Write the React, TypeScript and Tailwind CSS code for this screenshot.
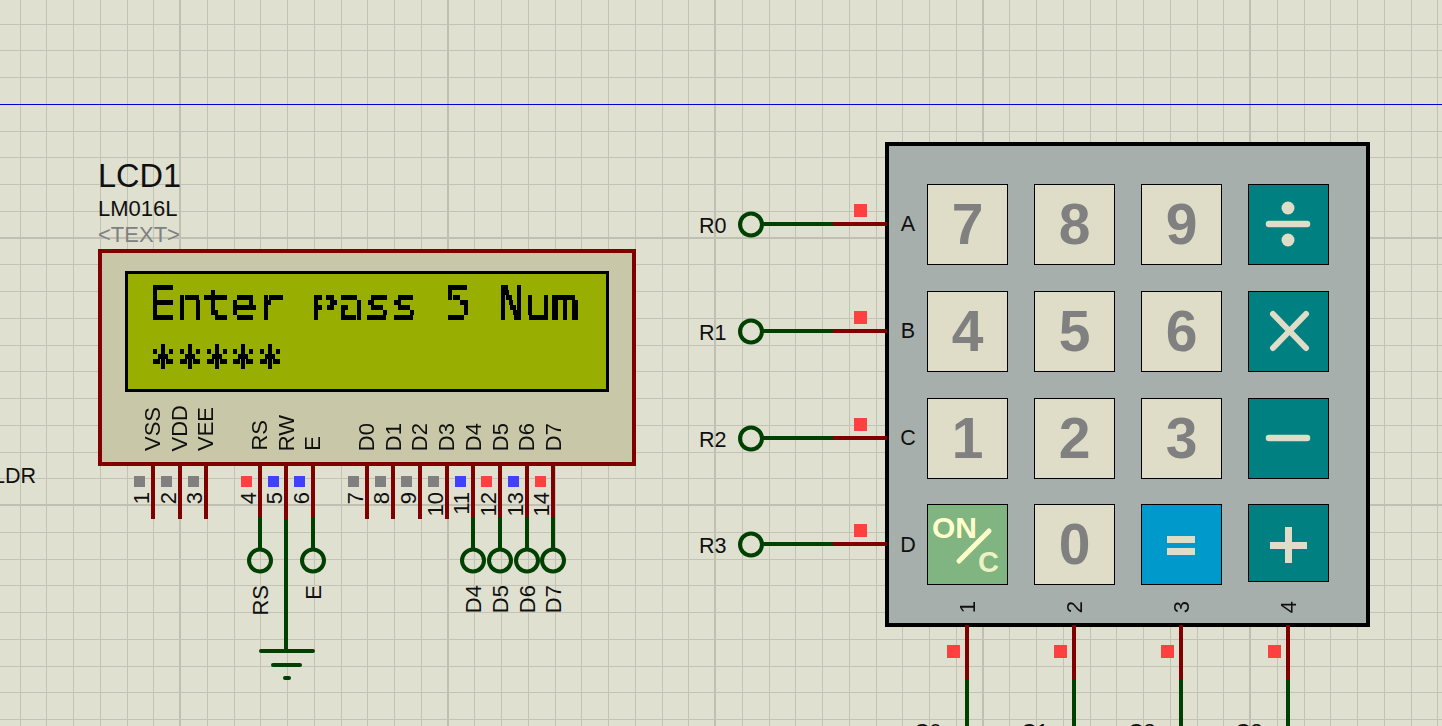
import type { ReactNode } from 'react';

const WIRE_RED = '#800000';
const WIRE_GREEN = '#004000';
const SANS = '"Liberation Sans", Arial, sans-serif';

const lcdPins = [
    { n: '1', x: 153, mark: 134, color: '#808080' },
    { n: '2', x: 180, mark: 161, color: '#808080' },
    { n: '3', x: 206, mark: 188, color: '#808080' },
    { n: '4', x: 260, mark: 241, color: '#ff4040' },
    { n: '5', x: 286, mark: 268, color: '#4040ff' },
    { n: '6', x: 313, mark: 294, color: '#4040ff' },
    { n: '7', x: 367, mark: 348, color: '#808080' },
    { n: '8', x: 393, mark: 375, color: '#808080' },
    { n: '9', x: 420, mark: 401, color: '#808080' },
    { n: '10', x: 447, mark: 428, color: '#808080' },
    { n: '11', x: 473, mark: 455, color: '#4040ff' },
    { n: '12', x: 500, mark: 481, color: '#ff4040' },
    { n: '13', x: 527, mark: 508, color: '#4040ff' },
    { n: '14', x: 553, mark: 535, color: '#ff4040' },
];

const lcdLabels = ['VSS', 'VDD', 'VEE', '', 'RS', 'RW', 'E', '', 'D0', 'D1', 'D2', 'D3', 'D4', 'D5', 'D6', 'D7'];
const netLabels = [
    { t: 'RS', x: 260 },
    { t: 'E', x: 313 },
    { t: 'D4', x: 473 },
    { t: 'D5', x: 500 },
    { t: 'D6', x: 527 },
    { t: 'D7', x: 553 },
];
const rows = [
    { t: 'R0', y: 224 },
    { t: 'R1', y: 331 },
    { t: 'R2', y: 438 },
    { t: 'R3', y: 544 },
];
const cols = [
    { t: 'C0', x: 967 },
    { t: 'C1', x: 1074 },
    { t: 'C2', x: 1181 },
    { t: 'C3', x: 1288 },
];

function Grid() {
    const xs = Array.from({ length: 56 }, (_, i) => i - 6);
    const ys = Array.from({ length: 28 }, (_, i) => i - 8);
    return (
        <svg className="absolute inset-0" width="1442" height="726" shapeRendering="crispEdges">
            {xs.map((k) => {
                const x = Math.round(180 + k * 26.75);
                return <line key={k} x1={x} x2={x} y1={0} y2={726} stroke={k % 10 === 0 ? '#c0c0b2' : '#c2c2b5'} strokeWidth={k % 10 === 0 ? 2 : 1} />;
            })}
            {ys.map((k) => {
                const y = Math.round(237.5 + k * 26.75);
                return <line key={k} x1={0} x2={1442} y1={y} y2={y} stroke={k % 10 === 0 ? '#c0c0b2' : '#c2c2b5'} strokeWidth={k % 10 === 0 ? 2 : 1} />;
            })}
            <line x1={0} x2={1442} y1={104} y2={104} stroke="#0000d0" strokeWidth={1} />
        </svg>
    );
}

function UpText({ x, y, children }: { x: number; y: number; children: string }) {
    return (
        <text x={x} y={y} transform={`rotate(-90 ${x} ${y})`} textAnchor="end" fontSize="22" fill="#101010" fontFamily={SANS}>
            {children}
        </text>
    );
}

function Wires() {
    return (
        <svg className="absolute inset-0 pointer-events-none" width="1442" height="726">
            {/* LCD pins */}
            {lcdPins.map((p) => (
                <g key={p.n}>
                    <line x1={p.x} x2={p.x} y1={465} y2={519} stroke={WIRE_RED} strokeWidth={4} />
                    <rect x={p.mark} y={476} width={11} height={11} fill={p.color} />
                    <UpText x={p.x - 4} y={492}>{p.n}</UpText>
                </g>
            ))}

            {/* LCD terminals */}
            {netLabels.map((n) => (
                <g key={n.t}>
                    <line x1={n.x} x2={n.x} y1={517} y2={550} stroke={WIRE_GREEN} strokeWidth={4} />
                    <circle cx={n.x} cy={560.5} r={11} fill="none" stroke={WIRE_GREEN} strokeWidth={4} />
                    <UpText x={n.x + 8} y={585}>{n.t}</UpText>
                </g>
            ))}

            {/* ground */}
            <line x1={286} x2={286} y1={519} y2={651} stroke={WIRE_GREEN} strokeWidth={4} />
            <line x1={261} x2={313} y1={651} y2={651} stroke={WIRE_GREEN} strokeWidth={4} strokeLinecap="round" />
            <line x1={273} x2={300} y1={665} y2={665} stroke={WIRE_GREEN} strokeWidth={4} strokeLinecap="round" />
            <line x1={285} x2={289} y1={678} y2={678} stroke={WIRE_GREEN} strokeWidth={4} strokeLinecap="round" />

            {/* keypad rows */}
            {rows.map((r) => (
                <g key={r.t}>
                    <text x={699} y={r.y + 8.5} fontSize="21.5" fill="#101010" fontFamily={SANS}>{r.t}</text>
                    <circle cx={751} cy={r.y + 0.5} r={11} fill="none" stroke={WIRE_GREEN} strokeWidth={4} />
                    <line x1={762} x2={833} y1={r.y} y2={r.y} stroke={WIRE_GREEN} strokeWidth={4} />
                    <line x1={833} x2={887} y1={r.y} y2={r.y} stroke={WIRE_RED} strokeWidth={4} />
                    <rect x={854} y={r.y - 20} width={13} height={13} fill="#ff4040" />
                </g>
            ))}

            {/* keypad columns */}
            {cols.map((c) => (
                <g key={c.t}>
                    <line x1={c.x} x2={c.x} y1={625} y2={679} stroke={WIRE_RED} strokeWidth={4} />
                    <line x1={c.x} x2={c.x} y1={679} y2={726} stroke={WIRE_GREEN} strokeWidth={4} />
                    <rect x={c.x - 20} y={645} width={13} height={13} fill="#ff4040" />
                    <text x={c.x - 53} y={739} fontSize="21.5" fill="#101010" fontFamily={SANS}>{c.t}</text>
                </g>
            ))}

            <text x={-7} y={483} fontSize="21.5" fill="#101010" fontFamily={SANS}>LDR</text>
        </svg>
    );
}

// one character of the dot matrix, real text run through the pixel filter
function LcdRow({ text, className }: { text: string; className: string }) {
    return (
        <div className={`flex ${className}`}>
            {text.split('').map((ch, i) => {
                // the panel squeezes p's tail into the cell, and the star is taller
                let shape = '';
                if (ch === 'p') shape = 'origin-[50%_25.6px] [transform:scaleY(0.7)] [-webkit-text-stroke:1.5px_black]';
                if (ch === '*') shape = 'origin-[50%_16px] [transform:scale(1.05,1.2)]';
                return (
                    <span key={i} className="block w-[26.8px] h-[35px] overflow-hidden text-center [filter:url(#lcd-px)]">
                        <span className={`block -mt-[16px] leading-[70px] ${shape}`}>{ch === ' ' ? '\u00a0' : ch}</span>
                    </span>
                );
            })}
        </div>
    );
}

function Lcd() {
    return (
        <>
            <svg className="absolute w-0 h-0">
                <filter id="lcd-px" x="0" y="0" width="1" height="1" primitiveUnits="userSpaceOnUse" colorInterpolationFilters="sRGB">
                    <feFlood x="1" y="2" width="2" height="1" floodColor="#000" />
                    <feComposite width="4" height="5" />
                    <feTile result="dots" />
                    <feComposite in="SourceGraphic" in2="dots" operator="in" />
                    <feMorphology operator="dilate" radius="1 2" />
                    <feComponentTransfer>
                        <feFuncA type="discrete" tableValues="0 1" />
                    </feComponentTransfer>
                </filter>
            </svg>
            <div className="absolute left-[98px] top-[158px] flex flex-col text-[#101010] font-['Liberation_Sans']">
                <span className="text-[32.5px] leading-[36px]">LCD1</span>
                <span className="mt-[3px] text-[22px] leading-[24px]">LM016L</span>
                <span className="mt-[2px] text-[22px] leading-[24px] text-[#808080]">&lt;TEXT&gt;</span>
            </div>
            <div className="absolute left-[98px] top-[249px] w-[538px] h-[217px] flex flex-col border-4 border-[#800000] bg-[#c8c8a9]">
                {/* Display */}
                <div className="ml-[23px] mt-[18px] w-[484px] h-[121px] border-[3px] border-black bg-[#98ae00] pl-[21px] pt-[11px] font-['DejaVu_Sans_Mono'] text-[46.6px] text-black">
                    <LcdRow text="Enter pass 5 Num" className="" />
                    <LcdRow text="*****" className="mt-[24px]" />
                </div>
                {/* Pin names */}
                <div className="flex-1 pl-[37.6px] pb-[11px] grid grid-cols-[repeat(16,26.75px)] items-end font-['Liberation_Sans'] text-[22px] leading-[26px] text-[#101010]">
                    {lcdLabels.map((label, i) => (
                        <span key={i} className="[writing-mode:vertical-rl] rotate-180 justify-self-center">
                            {label}
                        </span>
                    ))}
                </div>
            </div>
        </>
    );
}

function Key({ bg = 'bg-[#dfdcc8]', className = '', children }: { bg?: string; className?: string; children: ReactNode }) {
    return (
        <div className={`w-[81px] h-[81px] flex items-center justify-center border border-black ${bg} ${className}`}>
            {children}
        </div>
    );
}

function Digit({ value }: { value: string }) {
    return <span className="font-['Liberation_Sans'] font-bold text-[57px] leading-none text-[#808080]">{value}</span>;
}

const GLYPH = '#dfdcc8';

function DivideIcon() {
    return (
        <svg width="79" height="79" viewBox="0 0 79 79">
            <circle cx="39" cy="23" r="6.5" fill={GLYPH} />
            <circle cx="39" cy="55" r="6.5" fill={GLYPH} />
            <line x1="20" x2="58" y1="39" y2="39" stroke={GLYPH} strokeWidth="6.5" strokeLinecap="round" />
        </svg>
    );
}

function TimesIcon() {
    return (
        <svg width="79" height="79" viewBox="0 0 79 79">
            <line x1="24" y1="22" x2="57" y2="56" stroke={GLYPH} strokeWidth="6" strokeLinecap="round" />
            <line x1="57" y1="22" x2="24" y2="56" stroke={GLYPH} strokeWidth="6" strokeLinecap="round" />
        </svg>
    );
}

function MinusIcon() {
    return (
        <svg width="79" height="79" viewBox="0 0 79 79">
            <line x1="20" x2="58" y1="39" y2="39" stroke={GLYPH} strokeWidth="6.5" strokeLinecap="round" />
        </svg>
    );
}

function PlusIcon() {
    return (
        <svg width="79" height="76" viewBox="0 0 79 76">
            <rect x="21" y="37" width="37" height="7" fill={GLYPH} />
            <rect x="36" y="22" width="7" height="36" fill={GLYPH} />
        </svg>
    );
}

function EqualsIcon() {
    return (
        <svg width="79" height="79" viewBox="0 0 79 79">
            <rect x="25" y="31" width="28" height="7" fill={GLYPH} />
            <rect x="25" y="43" width="28" height="7" fill={GLYPH} />
        </svg>
    );
}

function OnCKey() {
    return (
        <Key bg="bg-[#80b480]" className="relative overflow-hidden">
            <span className="absolute left-[4px] top-[8px] font-['Liberation_Sans'] font-bold text-[30px] leading-[30px] text-[#ffffcc]">ON</span>
            <svg className="absolute inset-0" width="79" height="79" viewBox="0 0 79 79">
                <line x1="31" y1="56" x2="61" y2="26" stroke="#ffffcc" strokeWidth="5" strokeLinecap="round" />
            </svg>
            <span className="absolute left-[50px] top-[42px] font-['Liberation_Sans'] font-bold text-[29px] leading-[30px] text-[#ebf2c4]">C</span>
        </Key>
    );
}

function Keypad() {
    return (
        <div className="absolute left-[885px] top-[142px] w-[485px] h-[485px] flex border-4 border-black bg-[#a7afac] font-['Liberation_Sans'] text-[#101010]">
            <div className="w-[38px] pt-[38px] flex flex-col gap-y-[25.75px] text-[21.5px] shrink-0">
                {['A', 'B', 'C', 'D'].map((l) => (
                    <span key={l} className="h-[81px] flex items-center justify-center">{l}</span>
                ))}
            </div>
            <div className="pt-[38px] grid grid-cols-[repeat(4,81px)] auto-rows-[81px] gap-x-[26px] gap-y-[25.75px]">
                <Key><Digit value="7" /></Key>
                <Key><Digit value="8" /></Key>
                <Key><Digit value="9" /></Key>
                <Key bg="bg-[#008080]"><DivideIcon /></Key>
                <Key><Digit value="4" /></Key>
                <Key><Digit value="5" /></Key>
                <Key><Digit value="6" /></Key>
                <Key bg="bg-[#008080]"><TimesIcon /></Key>
                <Key><Digit value="1" /></Key>
                <Key><Digit value="2" /></Key>
                <Key><Digit value="3" /></Key>
                <Key bg="bg-[#008080]"><MinusIcon /></Key>
                <OnCKey />
                <Key><Digit value="0" /></Key>
                <Key bg="bg-[#0099cc]"><EqualsIcon /></Key>
                <Key bg="bg-[#008080]" className="!h-[78px]"><PlusIcon /></Key>
                {['1', '2', '3', '4'].map((n) => (
                    <div key={n} className="-mt-[10px] flex justify-center items-start text-[22px] leading-[26px]">
                        <span className="[writing-mode:vertical-rl] rotate-180">{n}</span>
                    </div>
                ))}
            </div>
        </div>
    );
}

export default function App() {
    return (
        <div className="relative w-[1442px] h-[726px] overflow-hidden bg-[#dfe0d0]">
            <Grid />
            <Lcd />
            <Keypad />
            <Wires />
        </div>
    );
}
